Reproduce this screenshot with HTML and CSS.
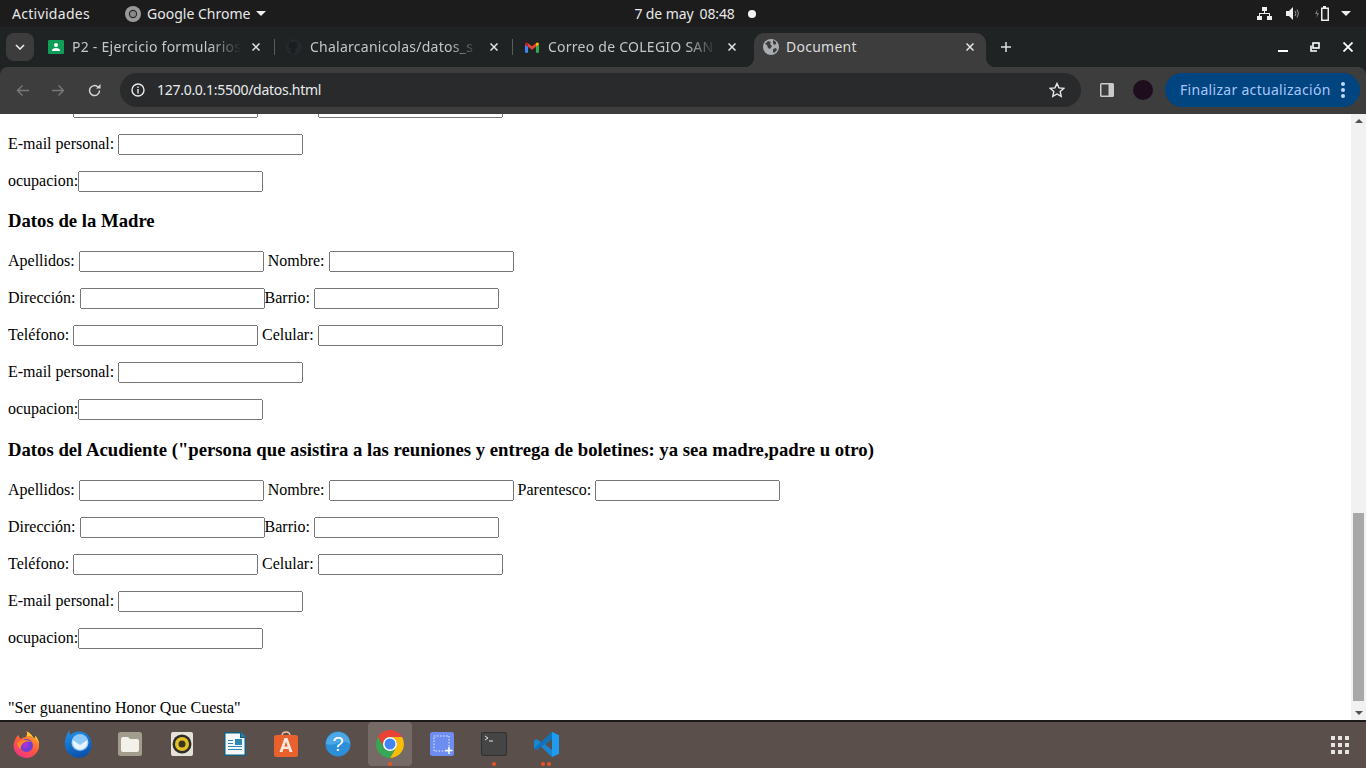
FILE: index.html
```html
<!DOCTYPE html>
<html lang="es">
<head>
    <meta charset="UTF-8">
    <meta name="viewport" content="width=device-width, initial-scale=1.0">
    <title>Document</title>
    <link rel="stylesheet" href="styles.css">
</head>
<body>

    <!-- Barra superior del escritorio -->
    <div class="topbar">
        <span class="activities">Actividades</span>
        <div class="app-menu">
            <svg class="app-menu-icon" viewBox="0 0 16 16" width="16" height="16">
                <circle cx="8" cy="8" r="8" fill="#9a9a9a"/>
                <circle cx="8" cy="8" r="4.200" fill="#2a2a2a"/>
                <circle cx="8" cy="8" r="3" fill="#8a8a8a"/>
            </svg>
            <span>Google Chrome</span>
            <span class="caret"></span>
        </div>
        <div class="clock">
            <span>7 de may</span>
            <span>08:48</span>
            <span class="clock-dot"></span>
        </div>
        <div class="status-icons">
            <svg viewBox="0 0 15 13" width="15" height="13" fill="#eee">
                <rect x="5" y="0" width="5" height="4"/>
                <rect x="0" y="9" width="5" height="4"/>
                <rect x="10" y="9" width="5" height="4"/>
                <path d="M7 4h1v2h5v3h-1V7H3v2H2V6h5z"/>
            </svg>
            <svg viewBox="0 0 15 13" width="15" height="13">
                <path d="M0 4h3l4-4v13L3 9H0z" fill="#eee"/>
                <path d="M9 4q2 2.500 0 5M11 2.500q3 4 0 8" fill="none" stroke="#999" stroke-width="1"/>
            </svg>
            <svg viewBox="0 0 15 15" width="15" height="15">
                <path d="M2.500 3L0 8h2l-.5 4L4 7H2z" fill="#777"/>
                <path d="M8 0h3v1.500h3V15H6V1.500h2z" fill="#eee"/>
                <rect x="7.500" y="3" width="5" height="10.500" fill="#222"/>
            </svg>
            <span class="caret status-caret"></span>
        </div>
    </div>

    <!-- Pestanas -->
    <div class="tabstrip">
        <button class="tab-search">
            <svg viewBox="0 0 10 6" width="10" height="6"><path d="M1 1l4 4 4-4" fill="none" stroke="#e8eaed" stroke-width="1.600"/></svg>
        </button>
        <div class="tab">
            <svg class="favicon" viewBox="0 0 16 16" width="16" height="16">
                <rect y="1" width="16" height="14" rx="1" fill="#0f9d58"/>
                <circle cx="8" cy="6" r="2" fill="#fff"/>
                <path d="M4 12q0-3 4-3t4 3z" fill="#fff"/>
            </svg>
            <span class="tab-title">P2 - Ejercicio formularios</span>
            <svg class="tab-close" viewBox="0 0 8 8" width="8" height="8"><path d="M.5.500l7 7M7.500.500l-7 7"/></svg>
        </div>
        <div class="tab">
            <svg class="favicon" viewBox="0 0 16 16" width="16" height="16">
                <circle cx="8" cy="8" r="8" fill="#24292e"/>
                <path d="M5 15v-3q-2 0-2.500-2 1 .5 2 1 0-1 .5-1.500-2.500-.5-2.500-3 0-1 .7-2-.2-1 .2-2 1 0 2 .8 1.500-.4 3 0 1-.8 2-.8.4 1 .2 2 .7 1 .7 2 0 2.500-2.500 3 .5.5.5 1.500v3z" fill="#1b1e20"/>
            </svg>
            <span class="tab-title">Chalarcanicolas/datos_s</span>
            <svg class="tab-close" viewBox="0 0 8 8" width="8" height="8"><path d="M.5.500l7 7M7.500.500l-7 7"/></svg>
        </div>
        <div class="tab tab-mail">
            <svg class="favicon" viewBox="0 0 16 12" width="14" height="11">
                <path d="M0 2.500V11q0 1 1 1h2.500V5z" fill="#4285f4"/>
                <path d="M12.500 5v7H15q1 0 1-1V2.500z" fill="#34a853"/>
                <path d="M3.500 5V1L8 4.500 12.500 1v4L8 8.500z" fill="#ea4335"/>
                <path d="M0 2.500C0 .5 2 -.5 3.500 1v4z" fill="#c5221f"/>
                <path d="M16 2.500C16 .5 14 -.5 12.500 1v4z" fill="#fbbc04"/>
            </svg>
            <span class="tab-title">Correo de COLEGIO SAN</span>
            <svg class="tab-close" viewBox="0 0 8 8" width="8" height="8"><path d="M.5.500l7 7M7.500.500l-7 7"/></svg>
        </div>
        <div class="tab tab-active">
            <svg class="favicon" viewBox="0 0 16 16" width="16" height="16">
                <circle cx="8" cy="8" r="8" fill="#a9adb2"/>
                <path d="M2 5l3-3 3 1-1 2 2 2-2 3-2-1-1-3zM10 1l3 2v2l-2 1-1-2zM10 10l3-1 1 2-3 3-1-1z" fill="#3d3d3d"/>
            </svg>
            <span class="tab-title">Document</span>
            <svg class="tab-close" viewBox="0 0 8 8" width="8" height="8"><path d="M.5.500l7 7M7.500.500l-7 7"/></svg>
        </div>
        <svg class="new-tab" viewBox="0 0 10 10" width="10" height="10"><path d="M5 0v10M0 5h10" stroke="#e0e0e0" stroke-width="1.500"/></svg>
        <div class="window-buttons">
            <span class="win-min"></span>
            <svg viewBox="0 0 10 10" width="10" height="10" fill="none" stroke="#fff" stroke-width="1.600">
                <rect x="3" y="1" width="6" height="5"/>
                <path d="M1 3.500V9h6"/>
            </svg>
            <svg class="win-close" viewBox="0 0 10 10" width="10" height="10" stroke="#fff" stroke-width="1.800"><path d="M.5.500l9 9M9.500.500l-9 9"/></svg>
        </div>
    </div>

    <!-- Barra de direccion -->
    <div class="toolbar">
        <svg class="nav-icon" viewBox="0 0 13 13" width="13" height="13" fill="none" stroke="#77797b" stroke-width="1.400"><path d="M13 6.500H1.500M6.500 1.500l-5 5 5 5"/></svg>
        <svg class="nav-icon" viewBox="0 0 13 13" width="13" height="13" fill="none" stroke="#77797b" stroke-width="1.400"><path d="M0 6.500h11.500M6.500 1.500l5 5-5 5"/></svg>
        <svg class="nav-icon nav-reload" viewBox="0 0 13 13" width="13" height="13" fill="none" stroke="#d5d7da" stroke-width="1.500"><path d="M11.500 6.500a5 5 0 1 1-1.500-3.500"/><path d="M12.500 0v4.500H8z" fill="#d5d7da" stroke="none"/></svg>
        <div class="omnibox">
            <svg class="info-icon" viewBox="0 0 14 14" width="14" height="14">
                <circle cx="7" cy="7" r="6" fill="none" stroke="#e8eaed" stroke-width="1.400"/>
                <rect x="6.300" y="6" width="1.400" height="4.500" fill="#e8eaed"/>
                <rect x="6.300" y="3.500" width="1.400" height="1.500" fill="#e8eaed"/>
            </svg>
            <span class="url">127.0.0.1:5500/datos.html</span>
            <svg class="star" viewBox="0 0 16 16" width="16" height="16"><path d="M8 1.500l2 4.400 4.700.5-3.500 3.200 1 4.700L8 12l-4.200 2.300 1-4.700L1.300 6.400 6 5.900z" fill="none" stroke="#e8eaed" stroke-width="1.400"/></svg>
        </div>
        <svg class="side-icon" viewBox="0 0 14 14" width="14" height="14">
            <rect width="14" height="14" rx="1.500" fill="#c8cacc"/>
            <rect x="1.500" y="1.500" width="7" height="11" fill="#3d3d3d"/>
        </svg>
        <span class="avatar"></span>
        <div class="update-pill">
            <span class="update-label">Finalizar actualización</span>
            <span class="dots"><i></i><i></i><i></i></span>
        </div>
    </div>

    <!-- Contenido de la pagina -->
    <div class="viewport">
        <div class="page">
            <div class="page-scrolled">
                <p>Teléfono: <input type="text"> Celular: <input type="text"></p>
                <p>E-mail personal: <input type="text"></p>
                <p>ocupacion:<input type="text"></p>

                <h3>Datos de la Madre</h3>
                <p>Apellidos: <input type="text"> Nombre: <input type="text"></p>
                <p>Dirección: <input type="text">Barrio: <input type="text"></p>
                <p>Teléfono: <input type="text"> Celular: <input type="text"></p>
                <p>E-mail personal: <input type="text"></p>
                <p>ocupacion:<input type="text"></p>

                <h3>Datos del Acudiente ("persona que asistira a las reuniones y entrega de boletines: ya sea madre,padre u otro)</h3>
                <p>Apellidos: <input type="text"> Nombre: <input type="text"> Parentesco: <input type="text"></p>
                <p>Dirección: <input type="text">Barrio: <input type="text"></p>
                <p>Teléfono: <input type="text"> Celular: <input type="text"></p>
                <p>E-mail personal: <input type="text"></p>
                <p>ocupacion:<input type="text"></p>
                <br>
                <p>"Ser guanentino Honor Que Cuesta"</p>
            </div>
        </div>
        <div class="scrollbar">
            <span class="arrow-up"></span>
            <div class="scroll-track"><div class="scroll-thumb"></div></div>
            <span class="arrow-down"></span>
        </div>
    </div>

    <!-- Dock -->
    <div class="dock">
        <div class="dock-item">
            <svg viewBox="0 0 28 28" width="28" height="28">
                <defs>
                    <linearGradient id="fxBody" x1="0.800" y1="0" x2="0.200" y2="1">
                        <stop offset="0" stop-color="#ffb21a"/>
                        <stop offset="0.500" stop-color="#ff5a3a"/>
                        <stop offset="1" stop-color="#f0308a"/>
                    </linearGradient>
                </defs>
                <path d="M4 8Q2 11 1.500 15 1.500 21 6 25q4 3 8 3 6 0 10-4.500 3.500-4 3-9.500-.5-5-4-8.500 1 3 0 5Q20 4 14.500 1q1.500 3-.5 6-3 0-5 2-2-1-2.500-4Q5 6 4 8z" fill="url(#fxBody)"/>
                <path d="M14.500 1Q20 4 23 10.500q1-2 0-5 3.500 3.500 4 8.500-2-5-6-7-3-1.500-6.500-.5 1.500-3 .5-5.500z" fill="#ffc62e"/>
                <circle cx="14.500" cy="15.500" r="6.500" fill="#6e3fd8"/>
                <circle cx="13.500" cy="15" r="3.200" fill="#a832d8"/>
                <path d="M5 13q3-3 8-3 4 0 6 2-4-1-7 .5T8.500 19Q5.500 17 5 13z" fill="#ff8a1f"/>
            </svg>
        </div>
        <div class="dock-item">
            <svg viewBox="0 0 30 30" width="30" height="30">
                <defs>
                    <linearGradient id="tbBody" x1="0.300" y1="0" x2="0.600" y2="1">
                        <stop offset="0" stop-color="#1f8fe8"/>
                        <stop offset="1" stop-color="#0a4fa8"/>
                    </linearGradient>
                </defs>
                <path d="M7 1q-1 3 0 5 3-3 8-3.500 7-.5 11 5 3.500 5 2.500 11-1.500 6-7 9Q16 30 10 27.500 3.500 24.500 2 18 1 13 3 8q1-4 4-7z" fill="url(#tbBody)"/>
                <circle cx="17" cy="13.500" r="8.500" fill="#8ec8f7"/>
                <path d="M9.500 11l7.500 5 7.500-5q.5 5-3 8-2 1.500-4.500 1.500T12.500 19q-3.500-3-3-8z" fill="#eaf4fd"/>
            </svg>
        </div>
        <div class="dock-item">
            <svg viewBox="0 0 24 24" width="24" height="24">
                <rect width="24" height="24" rx="2.500" fill="#a39d8d"/>
                <path d="M3 7q0-2 2-2h5l2 2h7q2 0 2 2v9q0 2-2 2H5q-2 0-2-2z" fill="#f3f1ea"/>
            </svg>
        </div>
        <div class="dock-item">
            <svg viewBox="0 0 22 24" width="22" height="24">
                <rect width="22" height="24" rx="2" fill="#e6e2d8"/>
                <circle cx="11" cy="12" r="9.500" fill="#2c2c2c"/>
                <circle cx="11" cy="12" r="7" fill="#e3c021"/>
                <circle cx="11" cy="12" r="3.500" fill="#3a3520"/>
            </svg>
        </div>
        <div class="dock-item">
            <svg viewBox="0 0 23 26" width="23" height="26">
                <path d="M1 1h17l5 5v19H1z" fill="#115e82"/>
                <path d="M2.500 2.500H17V7h4.500v16.500h-19z" fill="#f5f8fa"/>
                <path d="M18 1l5 5h-5z" fill="#2a7da8"/>
                <rect x="12" y="8" width="7" height="6" fill="#2e87b5"/>
                <path d="M5 9h5v1H5zM5 12h5v1H5zM5 15h14v1H5zM5 18h14v1H5z" fill="#2e87b5"/>
            </svg>
        </div>
        <div class="dock-item">
            <svg viewBox="0 0 24 26" width="24" height="26">
                <path d="M8 5q0-4 4-4t4 4" fill="none" stroke="#f2c0a0" stroke-width="1.500"/>
                <rect y="4" width="24" height="22" rx="2.500" fill="#e9612c"/>
                <path d="M10.500 7h3l5 14h-3l-1-3H9.500l-1 3h-3zM10.300 15.500h3.400L12 10.500z" fill="#fbe9df"/>
            </svg>
        </div>
        <div class="dock-item">
            <svg viewBox="0 0 26 26" width="26" height="26">
                <circle cx="13" cy="13" r="12.500" fill="#2b8fd9"/>
                <path d="M1 13a12 12 0 0 1 24 0q-6-4-12-1t-12 1z" fill="#4ba7e6"/>
                <text x="13" y="20" text-anchor="middle" class="help-mark">?</text>
            </svg>
        </div>
        <div class="dock-item dock-active">
            <svg viewBox="0 0 28 28" width="28" height="28">
                <path d="M14 0A14 14 0 0 1 26.120 7H14A7 7 0 0 0 7.940 17.500L1.880 7A14 14 0 0 1 14 0z" fill="#ea4335"/>
                <path d="M26.120 7A14 14 0 0 1 14 28L20.060 17.500A7 7 0 0 0 14 7z" fill="#fbbc04"/>
                <path d="M14 28A14 14 0 0 1 1.880 7L7.940 17.500A7 7 0 0 0 20.060 17.500z" fill="#34a853"/>
                <circle cx="14" cy="14" r="7" fill="#fff"/>
                <circle cx="14" cy="14" r="5.500" fill="#4285f4"/>
            </svg>
            <span class="dock-pips"><i></i></span>
        </div>
        <div class="dock-item">
            <svg viewBox="0 0 24 24" width="24" height="24">
                <rect width="24" height="24" rx="2.500" fill="#6d8ef0"/>
                <rect x="4" y="4" width="15" height="15" fill="none" stroke="#e9eefc" stroke-width="1" stroke-dasharray="1.500 1.500"/>
                <path d="M19 15v7M15.500 18.500h7" stroke="#fff" stroke-width="1.400"/>
            </svg>
        </div>
        <div class="dock-item">
            <svg viewBox="0 0 26 24" width="26" height="24">
                <rect width="26" height="24" rx="3" fill="#2f2f2f"/>
                <rect x="1" y="1" width="24" height="22" rx="2" fill="#454545"/>
                <path d="M4 4l3 2-3 2" fill="none" stroke="#e6e6e6" stroke-width="1"/>
                <path d="M8 9h4" stroke="#e6e6e6" stroke-width="1"/>
            </svg>
            <span class="dock-pips"><i></i></span>
        </div>
        <div class="dock-item">
            <svg viewBox="0 0 100 100" width="25" height="25">
                <path d="M72 0L100 13V87L72 100 28 58 11 72 0 66V34L11 28 28 42zM72 28L45 50 72 72z" fill="#1787d4" fill-rule="evenodd"/>
                <path d="M72 0L100 13V87L72 100z" fill="#1f9cf0"/>
                <path d="M0 66L11 72 72 28V0L0 66z" fill="#0f6cb0" opacity=".75"/>
            </svg>
            <span class="dock-pips"><i></i><i></i></span>
        </div>
        <div class="apps-grid">
            <i></i><i></i><i></i><i></i><i></i><i></i><i></i><i></i><i></i>
        </div>
    </div>

</body>
</html>
```

FILE: styles.css
```css
* {
    box-sizing: border-box;
}

html,
body {
    margin: 0;
    height: 768px;
    overflow: hidden;
}

body {
    display: flex;
    flex-direction: column;
    font-family: "Noto Sans", sans-serif;
    background-color: #202323;
}

/* barra superior */
.topbar {
    display: flex;
    align-items: center;
    height: 27px;
    flex-shrink: 0;
    padding: 0 15px 0 12px;
    background-color: #1c1c1c;
    color: #e8e8e8;
    font-size: 14px;
}

.activities {
    margin-right: 35px;
    letter-spacing: 0.3px;
}

.app-menu {
    display: flex;
    align-items: center;
    gap: 6px;
}

.caret {
    display: inline-block;
    width: 0;
    height: 0;
    border-left: 5px solid transparent;
    border-right: 5px solid transparent;
    border-top: 5px solid #eee;
}

.clock {
    display: flex;
    align-items: center;
    gap: 6px;
    margin-left: 368px;
    letter-spacing: -0.1px;
}

.clock-dot {
    width: 8px;
    height: 8px;
    margin-left: 7px;
    border-radius: 50%;
    background-color: #f4f4f4;
}

.status-icons {
    display: flex;
    align-items: center;
    gap: 14px;
    margin-left: auto;
}

.status-caret {
    margin-left: -3px;
}

/* pestanas */
.tabstrip {
    display: flex;
    align-items: flex-end;
    height: 40px;
    flex-shrink: 0;
    background-color: #202323;
    color: #c4c7c5;
    font-size: 14px;
}

.tab-search {
    display: flex;
    align-items: center;
    justify-content: center;
    width: 28px;
    height: 28px;
    margin: 0 6px 6px 6px;
    padding: 0;
    border: none;
    border-radius: 8px;
    background-color: #3c3c3c;
}

.tab {
    display: flex;
    align-items: center;
    position: relative;
    width: 238px;
    height: 34px;
    padding: 0 18px 6px 8px;
}

.tab::after {
    content: "";
    position: absolute;
    right: 3px;
    top: 6px;
    width: 1px;
    height: 16px;
    background-color: #5a5c5e;
}

.tab-mail {
    padding-left: 9px;
}

.tab-mail .favicon {
    margin-right: 9px;
}

.tab-mail::after {
    display: none;
}

.favicon {
    flex-shrink: 0;
    margin-right: 8px;
}

.tab-title {
    flex: 1;
    overflow: hidden;
    padding-bottom: 2px;
    white-space: nowrap;
    letter-spacing: 0.25px;
    -webkit-mask-image: linear-gradient(to right, #000 82%, transparent 100%);
    mask-image: linear-gradient(to right, #000 82%, transparent 100%);
}

.tab-close {
    flex-shrink: 0;
    margin-left: 11px;
    fill: none;
    stroke: #e4e4e4;
    stroke-width: 1.500;
}

.tab-active {
    width: 232px;
    padding-left: 9px;
    padding-right: 12px;
    border-radius: 10px 10px 0 0;
    background-color: #3d3d3d;
    color: #dcdcdc;
}

.tab-active .favicon {
    margin-right: 7px;
}

.tab-active .tab-title {
    -webkit-mask-image: none;
    mask-image: none;
}

/* esquinas curvas de la pestana activa */
.tab-active::before,
.tab-active::after {
    content: "";
    display: block;
    position: absolute;
    top: auto;
    bottom: 0;
    width: 10px;
    height: 10px;
}

.tab-active::before {
    left: -10px;
    background: radial-gradient(circle at 0 0, transparent 10px, #3d3d3d 10.500px);
}

.tab-active::after {
    right: -10px;
    background: radial-gradient(circle at 100% 0, transparent 10px, #3d3d3d 10.500px);
}

.new-tab {
    margin: 0 0 15px 15px;
}

.window-buttons {
    display: flex;
    align-items: center;
    gap: 22px;
    margin: 0 13px 15px auto;
}

.win-min {
    width: 10px;
    height: 2px;
    margin-top: 8px;
    background-color: #fff;
}

.win-close {
    margin-left: 1px;
}

/* barra de direccion */
.toolbar {
    display: flex;
    align-items: center;
    height: 47px;
    flex-shrink: 0;
    padding: 0 6px 1px 16px;
    background-color: #3d3d3d;
    border-radius: 8px 8px 0 0;
}

.nav-icon {
    flex-shrink: 0;
    margin-right: 23px;
}

.nav-reload {
    margin-right: 19px;
}

.omnibox {
    display: flex;
    align-items: center;
    width: 961px;
    height: 34px;
    padding: 0 16px 0 11px;
    border-radius: 17px;
    background-color: #292a2b;
    color: #e8eaed;
    font-size: 14px;
}

.url {
    margin-left: 12px;
    padding-bottom: 2px;
    letter-spacing: -0.28px;
}

.star {
    margin-left: auto;
}

.side-icon {
    margin-left: 19px;
}

.avatar {
    width: 20px;
    height: 20px;
    margin-left: 19px;
    border-radius: 50%;
    background-color: #1e0d1c;
}

.update-pill {
    display: flex;
    align-items: center;
    justify-content: space-between;
    width: 195px;
    height: 34px;
    margin-left: 12px;
    padding: 0 15px 0 15px;
    border-radius: 17px;
    background-color: #004480;
    color: #a8c7fa;
    font-size: 14px;
    letter-spacing: 0.3px;
    white-space: nowrap;
}

.update-label {
    padding-bottom: 2px;
}

.dots {
    display: flex;
    flex-direction: column;
    gap: 2px;
}

.dots i {
    width: 4px;
    height: 4px;
    border-radius: 50%;
    background-color: #c2d8fb;
}

/* contenido */
.viewport {
    display: flex;
    flex: 1;
    min-height: 0;
}

.page {
    flex: 1;
    overflow: hidden;
    padding: 0 8px;
    background-color: #fff;
    font-family: "Liberation Serif", serif;
    font-size: 16px;
    color: #000;
}

.page-scrolled {
    margin-top: -17.3px;
}

.page p {
    margin: 16px 0;
}

.page-scrolled p:first-child {
    margin-top: 0;
}

.page h3 {
    margin: 18.72px 0;
    font-size: 18.72px;
}

.scrollbar {
    display: flex;
    flex-direction: column;
    width: 15px;
    flex-shrink: 0;
    background-color: #f1f1f1;
}

.scroll-track {
    display: flex;
    flex: 1;
    flex-direction: column;
    justify-content: flex-end;
    padding: 0 2px 4px 2px;
}

.scroll-thumb {
    height: 188px;
    background-color: #a8a8a8;
}

.arrow-up,
.arrow-down {
    display: block;
    flex-shrink: 0;
    width: 0;
    height: 0;
    margin: 5px auto;
    border-left: 4px solid transparent;
    border-right: 4px solid transparent;
}

.arrow-up {
    border-bottom: 4px solid #505050;
}

.arrow-down {
    margin-top: 6px;
    margin-bottom: 5px;
    border-top: 4px solid #505050;
}

/* dock */
.dock {
    display: flex;
    align-items: flex-start;
    height: 48px;
    flex-shrink: 0;
    padding: 0 4px;
    gap: 8px;
    border-top: 2px solid #1d1a19;
    background-color: #5a4f4b;
}

.dock-item {
    display: flex;
    align-items: center;
    justify-content: center;
    position: relative;
    width: 44px;
    height: 44px;
    border-radius: 4px;
}

.dock-active {
    background-color: #756a66;
}

.dock-pips {
    display: flex;
    gap: 2px;
    position: absolute;
    bottom: 0;
    left: 50%;
    transform: translateX(-50%);
}

.dock-pips i {
    width: 4px;
    height: 4px;
    border-radius: 50%;
    background-color: #e95420;
}

.help-mark {
    font-family: "Liberation Sans", sans-serif;
    font-size: 20px;
    fill: #fff;
}

.apps-grid {
    display: grid;
    grid-template-columns: repeat(3, 4px);
    gap: 3px;
    align-self: center;
    margin-left: auto;
    margin-right: 13px;
}

.apps-grid i {
    width: 4px;
    height: 4px;
    background-color: #e6e3e1;
}
```
